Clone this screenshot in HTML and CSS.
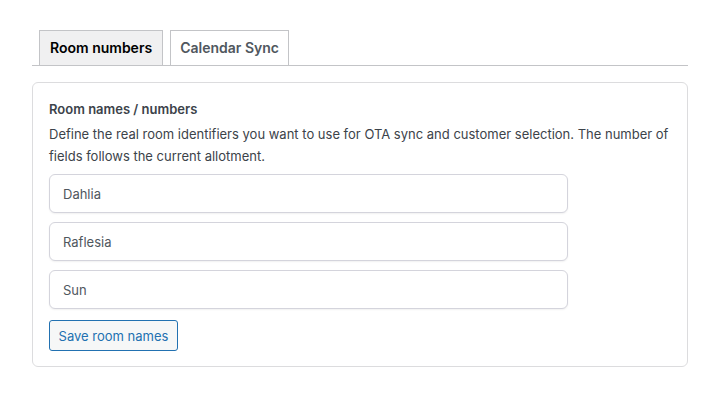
FILE: index.html
```html
<!DOCTYPE html>
<html lang="en">
<head>
  <meta charset="UTF-8">
  <title>Room numbers</title>
  <link rel="stylesheet" href="styles.css">
</head>
<body>
  <div class="wrap">
    <nav class="tabs">
      <a class="tab active" href="#">Room numbers</a>
      <a class="tab" href="#">Calendar Sync</a>
    </nav>
    <div class="card">
      <h2>Room names / numbers</h2>
      <p class="desc">Define the real room identifiers you want to use for OTA sync and customer selection. The number of fields follows the current allotment.</p>
      <div class="fields">
        <input type="text" value="Dahlia">
        <input type="text" value="Raflesia">
        <input type="text" value="Sun">
      </div>
      <button class="btn">Save room names</button>
    </div>
  </div>
</body>
</html>
```

FILE: styles.css
```css
body {
  margin: 0;
  background: #fff;
  font-family: Inter, "Noto Sans", sans-serif;
  color: #3c434a;
}
.wrap {
  padding: 30px 31px 0 32px;
}
.tabs {
  display: flex;
  gap: 7px;
  padding-left: 7px;
  border-bottom: 1px solid #c3c4c7;
}
.tab {
  display: block;
  height: 34px;
  line-height: 34px;
  padding: 0 10px;
  border: 1px solid #c3c4c7;
  border-bottom: none;
  background: #fff;
  color: #50575e;
  font-size: 14px;
  font-weight: 600;
  text-decoration: none;
}
.tab + .tab {
  padding: 0 9px;
}
.tab.active {
  background: #f0f0f1;
  color: #000;
}
.card {
  margin-top: 16px;
  border: 1px solid #dcdcde;
  border-radius: 6px;
  padding: 17px 16px 15px;
}
h2 {
  margin: 0;
  font-size: 13px;
  font-weight: 600;
  color: #3c434a;
  line-height: 18px;
}
.desc {
  margin: 5px 0 7px;
  font-size: 13px;
  line-height: 22px;
  color: #3c434a;
}
.fields {
  display: flex;
  flex-direction: column;
  gap: 9px;
  width: 519px;
}
.fields input {
  height: 39px;
  box-sizing: border-box;
  border: 1px solid #d4d4dc;
  border-radius: 6px;
  padding: 0 13px;
  font-family: inherit;
  font-size: 13px;
  color: #50575e;
  box-shadow: 0 1px 2px rgba(0,0,0,0.06);
}
.btn {
  margin-top: 11px;
  width: 129px;
  height: 31px;
  padding: 0;
  border: 1px solid #2271b1;
  border-radius: 3px;
  background: #f6f7f7;
  color: #2271b1;
  font-family: inherit;
  font-size: 13px;
}
```
